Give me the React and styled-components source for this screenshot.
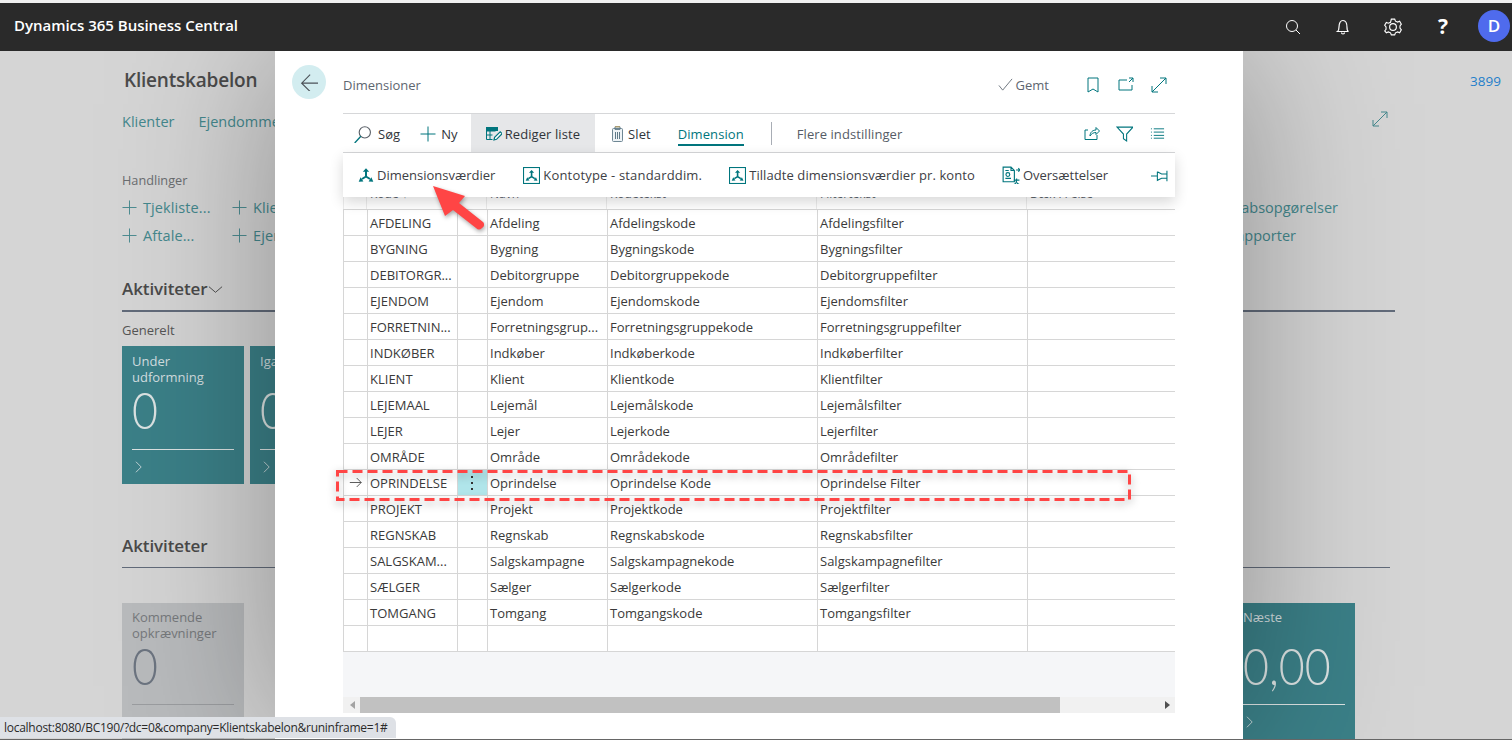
import React from "react";
import styled, { createGlobalStyle } from "styled-components";

const Global = createGlobalStyle`
  html, body { margin: 0; padding: 0; background: #d5d5d5; }
  body { font-family: "Open Sans", "Noto Sans", sans-serif; }
  * { box-sizing: border-box; }
`;

const TEAL = "#00757d";
const Page = styled.div`
  position: relative; width: 1512px; height: 740px; overflow: hidden;
  display: flex; flex-direction: column; background: #d5d5d5;
  border-top: 3px solid #f0f0f0; border-bottom: 1px solid #666;
`;
const TopBar = styled.header`
  position: relative; z-index: 3; flex: 0 0 48px; background: #2a2a2a; color: #fff;
  display: flex; align-items: center; justify-content: space-between; padding: 0 2px 0 14px;
`;
const Brand = styled.div`font-size: 15px; font-weight: 600; letter-spacing: -0.02px; margin-top: -4px;`;
const TopIcons = styled.div`display: flex; align-items: center;`;
const TopSlot = styled.div`width: 50px; display: flex; justify-content: center; color: #fff; margin-top:-1px;`;
const Help = styled.div`font-size: 21px; font-weight: 700; line-height: 1; color: #fff;`;
const Avatar = styled.div`
  width: 32px; height: 32px; border-radius: 50%; background: #4f6bed; color: #fff; margin-left: 10px; margin-top: -3px;
  display: flex; align-items: center; justify-content: center; font-weight: 600; font-size: 17px;
`;

const Backdrop = styled.main`flex: 1; min-height: 0; padding: 0 11px 0 122px; color: #4a4a4a;`;
const TitleRow = styled.div`height: 57px; padding-top: 14px; display: flex; justify-content: space-between; align-items: flex-start;`;
const PageTitle = styled.h1`margin: 0 0 0 2px; font-size: 19px; font-weight: 600; line-height: 30px; color: #4b4b4b; letter-spacing: -0.2px;`;
const Phone = styled.span`font-size: 13.5px; line-height: 32px; color: #1f7fca;`;
const NavRow = styled.nav`
  height: 26px; display: flex; gap: 24px; align-items: center; color: #44888d; font-size: 14.5px; position: relative;
`;
const NavExpand = styled.span`position: absolute; left: 1250px; top: 3px; color: #44888d;`;
const Block = styled.div`padding-top: 37px; font-size: 13px;`;
const Muted = styled.div`color: #6a6d70; font-size: 12.7px; line-height: 18px;`;
const ActionRow = styled.div`
  height: 28px; display: flex; align-items: center; justify-content: space-between; padding-right: 163px; color: #44888d; font-size: 14.5px;
  margin-top: ${p => p.$first ? "4px" : "0"};
`;
const ActionGroup = styled.div`display: grid; grid-template-columns: 110px 110px;`;
const ActionLink = styled.span`display: inline-flex; align-items: center; gap: 6px; letter-spacing: .1px;`;
const RightLink = styled.span`margin-right: ${p => p.$mr || 0};`;
const SectionHead = styled.h2`
  margin: ${p => p.$plain ? "50px" : "28px"} 0 0; font-size: 17px; font-weight: 600; line-height: 24px; color: #4a4a4a; letter-spacing: -0.1px;
  display: flex; align-items: center;
`;
const Rule = styled.div`
  margin-top: 9px; height: ${p => p.$thin ? "1px" : "2px"}; background: #626b7a; margin-right: ${p => p.$thin ? "111px" : "106px"};
`;
const SubHead = styled.div`margin-top: 10px; font-size: 13px; line-height: 17px; color: #555;`;
const Tiles = styled.div`display: flex; gap: 6px; margin-top: ${p => p.$top || "7px"}; justify-content: ${p => p.$spread ? "space-between" : "flex-start"}; padding-right: ${p => p.$spread ? "146px" : "0"};`;
const Tile = styled.div`
  width: 122px; height: ${p => p.$tall ? "136px" : "138px"}; padding: ${p => p.$tall ? "6px" : "7px"} 10px 0; flex: none;
  background: ${p => p.$gray ? "#b9bbbd" : "#3b8088"}; color: ${p => p.$gray ? "#76797c" : "#d3dfe0"};
  display: flex; flex-direction: column;
`;
const TileLabel = styled.div`font-size: 13px; line-height: 16px; height: 32px;`;
const TileValue = styled.div`
  font-family: "Lato", sans-serif; font-weight: 300; font-size: 52px; line-height: 44px; color: ${p => p.$gray ? "#6c7480" : "#dce3e3"};
  margin-top: 2px; flex: 1; transform: scaleX(.86); transform-origin: left center;
`;
const TileRule = styled.div`height: 1px; background: ${p => p.$gray ? "#9b9da0" : "#dce3e3"};`;
const TileMore = styled.div`height: 34px; display: flex; align-items: center; color: #cfdcdd;`;

const Modal = styled.section`
  position: absolute; left: 275px; top: 48px; bottom: 0; width: 968px; background: #fff; z-index: 2;
  box-shadow: 0 0 150px rgba(0,0,0,.34);
  display: grid; grid-template-columns: 68px 832px;
`;
const BackCol = styled.div`padding: 14px 0 0 17px;`;
const BackBtn = styled.div`width: 34px; height: 34px; border-radius: 50%; background: #d3edf0; display: flex; align-items: center; justify-content: center; color: #4c5258;`;
const Body = styled.div`position: relative; min-width: 0;`;
const ModalHead = styled.div`
  height: 63px; display: flex; align-items: center; justify-content: space-between; border-bottom: 1px solid #d6d7d9; padding-top: 5px;
`;
const Crumb = styled.div`font-size: 13px; color: #5e6670;`;
const HeadTools = styled.div`display: flex; align-items: center; color: ${TEAL};`;
const Saved = styled.span`display: inline-flex; align-items: center; gap: 3px; font-size: 13px; color: #5e6670; margin-right: 27px;`;
const HeadTool = styled.span`width: 33px; display: flex; justify-content: center;`;
const ActionBar = styled.div`
  height: 39px; display: flex; align-items: center; font-size: 13px; color: #30343a; border-bottom: 1px solid #d6d7d9; letter-spacing: .08px;
`;
const BarBtn = styled.span`
  display: inline-flex; align-items: center; gap: ${p => p.$gap || "5px"}; height: 38px;
  padding: 2px ${p => p.$pad || "8px"} 0; background: ${p => p.$active ? "#e6e7e9" : "transparent"}; color: #30343a; margin-left: ${p => p.$ml || 0};
`;
const Tinted = styled.span`color: ${TEAL}; display: flex;`;
const TabBtn = styled.span`
  color: ${TEAL}; margin-left: 11px; line-height: 18px; border-bottom: 2px solid ${TEAL}; padding-bottom: 1px; margin-top: 5px;
`;
const Sep = styled.span`width: 1px; height: 23px; background: #a8adb5; margin: 0 25px 0 27px;`;
const MoreLink = styled.span`color: #565c66; margin-top: 2px;`;
const BarRight = styled.span`margin-left: auto; display: flex; align-items: center; color: ${TEAL}; padding-right: 1px;`;
const BarTool = styled.span`width: 33px; display: flex; justify-content: center;`;
const Menu = styled.div`
  position: absolute; left: 0; right: 0; top: 102px; height: 44px; background: #fff; z-index: 1;
  box-shadow: 0 5px 14px rgba(0,0,0,.16);
  display: flex; align-items: center; font-size: 13px; padding-left: 15px;
`;
const MenuItem = styled.span`display: inline-flex; align-items: center; gap: 3px; margin-right: ${p => p.$mr}; color: ${TEAL};`;
const MenuText = styled.span`color: #3d4045; letter-spacing: ${p => p.$ls || 0};`;
const MenuPin = styled.span`margin-left: auto; margin-right: 7px; color: ${TEAL}; display: flex;`;

const cols = "23px 90px 30px 120px 210px 210px 148px";
const HeadRow = styled.div`
  display: grid; grid-template-columns: ${cols}; height: 56px; font-size: 12px; color: #5e6670; border-left: 1px solid #ececec;
`;
const HeadCell = styled.div`
  display: flex; align-items: flex-end; padding: 0 3px 7px; border-right: 1px solid #ececec;
  &:last-child { border-right: 0; }
`;
const Row = styled.div`
  display: grid; grid-template-columns: ${cols}; height: 26px; border-top: 1px solid #d6d6d6; font-size: 13px; color: #3a3a3a;
  border-left: 1px solid #d6d6d6;
`;
const Cell = styled.div`
  display: flex; align-items: center; padding: 0 3px 0 2px; white-space: nowrap; overflow: hidden;
  border-left: 1px solid #d6d6d6;
  ${p => p.$lead && "border-left: 0; padding: 0 0 0 5px;"}
  ${p => p.$menu && "background: #b0e5ea; justify-content: center; padding: 0 2px 0 0;"}
`;
const Kebab = styled.span`display: flex; flex-direction: column; gap: 4px;`;
const Dot = styled.i`width: 2px; height: 2px; background: #333; display: block;`;
const Filler = styled.div`height: 46px; background: #f5f6f8; border-top: 1px solid #d6d6d6;`;
const ScrollBar = styled.div`
  height: 16px; background: #f1f1f1; display: flex; align-items: center; justify-content: space-between; padding: 0 5px; color: #505050; position: relative;
`;
const Thumb = styled.div`position: absolute; left: 17px; top: 0; bottom: 0; width: 700px; background: #c1c1c1;`;
const ArrowL = styled.i`width: 0; height: 0; border: 4px solid transparent; border-left: 0; border-right: 5px solid #a3a3a3; margin-left: 2px;`;
const ArrowR = styled.i`width: 0; height: 0; border: 4px solid transparent; border-right: 0; border-left: 5px solid #505050;`;

const StatusTip = styled.div`
  position: absolute; left: 0; bottom: 1px; z-index: 5; height: 21px; width: 396px; background: #dee1e6; border-top-right-radius: 6px;
  font-size: 12px; line-height: 21px; padding-left: 4px; color: #2a2a2a; letter-spacing: -0.27px; white-space: nowrap;
`;
const Highlight = styled.svg`
  position: absolute; left: 335px; top: 466px; z-index: 4; filter: drop-shadow(0 3px 4px rgba(0,0,0,.35));
`;
const Pointer = styled.svg`position: absolute; left: 425px; top: 175px; z-index: 4; filter: drop-shadow(1px 2px 2px rgba(0,0,0,.35));`;

const Svg = ({ s = 16, w = 16, children, sw = 1, ...r }) => (
  <svg width={s} height={s} viewBox={`0 0 ${w} ${w}`} fill="none" stroke="currentColor" strokeWidth={sw} {...r}>{children}</svg>
);
const Plus = ({ s = 15 }) => <Svg s={s}><path d="M8 .5v15M.5 8h15" /></Svg>;
const Chevron = () => <Svg s={14}><path d="M4.5 2l6 6-6 6" /></Svg>;
const Expand = ({ s = 16 }) => <Svg s={s}><path d="M1 15L15 1M9 1h6v6M1 9v6h6" /></Svg>;
const TriArrow = () => (
  <g>
    <path d="M8 9.500V3.500M8 9.500l4 2.500M8 9.500l-4 2.500" strokeWidth="2" />
    <path d="M4.800 4.800L8 1.200l3.200 3.600zM10.600 14.500l4.700.3-1.900-4.500zM5.400 14.500l-4.700.3 1.900-4.500z" fill="currentColor" stroke="none" />
  </g>
);
const DimIcon = () => <Svg s={16}><TriArrow /></Svg>;
const BoxDim = () => (
  <Svg s={17}><rect x=".5" y=".5" width="15" height="15" />
    <g transform="translate(2 1.800) scale(.76)"><TriArrow /></g></Svg>
);
const Search = () => <Svg s={18}><circle cx="10.500" cy="6.500" r="5" stroke="#5a6068" /><path d="M7 10L1.500 16" stroke={TEAL} strokeWidth="1.200" /></Svg>;
const EditList = () => (
  <Svg s={16}><path d="M.5 1.500h11v3M.5 1.500v12h6M.5 5h9M.5 9h6M4 5v8.500" /><rect x=".5" y="1.500" width="11" height="3" fill="currentColor" />
    <path d="M8 14l.6-2.600 5.600-5.600 1.900 1.900-5.600 5.600z" fill="#fff" strokeWidth="1.200" /></Svg>
);
const Trash = () => (
  <Svg s={16} style={{ color: "#6e8794" }}><rect x="1.500" y="2.500" width="10" height="13" rx="1" fill="#eef3f6" />
    <path d="M4 .8h5v2.600H4zM4.500 6v7M6.500 6v7M8.500 6v7" stroke="#5f7a88" /><path d="M4 .8h5" stroke="#b59a5a" /></Svg>
);
const Translate = () => (
  <Svg s={18}><path d="M1 1h7l3 3v10H1zM8 1v3h3M3 4h3M3 11h5" /><circle cx="5.200" cy="7.600" r="1.700" />
    <path d="M12.500 3.500h3M14.500 2l1.500 1.500L14.500 5M10.500 12.500h5M13 11v1.500c0 2-1 3.500-2.500 4M12.500 14c.8 1.200 2 2.200 3.200 2.600" /></Svg>
);

const rows = [
  ["AFDELING", "Afdeling", "Afdelingskode", "Afdelingsfilter"],
  ["BYGNING", "Bygning", "Bygningskode", "Bygningsfilter"],
  ["DEBITORGR...", "Debitorgruppe", "Debitorgruppekode", "Debitorgruppefilter"],
  ["EJENDOM", "Ejendom", "Ejendomskode", "Ejendomsfilter"],
  ["FORRETNIN...", "Forretningsgrup...", "Forretningsgruppekode", "Forretningsgruppefilter"],
  ["INDKØBER", "Indkøber", "Indkøberkode", "Indkøberfilter"],
  ["KLIENT", "Klient", "Klientkode", "Klientfilter"],
  ["LEJEMAAL", "Lejemål", "Lejemålskode", "Lejemålsfilter"],
  ["LEJER", "Lejer", "Lejerkode", "Lejerfilter"],
  ["OMRÅDE", "Område", "Områdekode", "Områdefilter"],
  ["OPRINDELSE", "Oprindelse", "Oprindelse Kode", "Oprindelse Filter"],
  ["PROJEKT", "Projekt", "Projektkode", "Projektfilter"],
  ["REGNSKAB", "Regnskab", "Regnskabskode", "Regnskabsfilter"],
  ["SALGSKAM...", "Salgskampagne", "Salgskampagnekode", "Salgskampagnefilter"],
  ["SÆLGER", "Sælger", "Sælgerkode", "Sælgerfilter"],
  ["TOMGANG", "Tomgang", "Tomgangskode", "Tomgangsfilter"],
  ["", "", "", ""],
];

export default function App() {
  return (
    <Page>
      <Global />
      <TopBar>
        <Brand>Dynamics 365 Business Central</Brand>
        <TopIcons>
          <TopSlot><Svg s={16}><circle cx="7" cy="7" r="5.500" /><path d="M11 11l4 4" /></Svg></TopSlot>
          <TopSlot><Svg s={16} sw={1.200}><path d="M2.500 12.500c1.300-1 1.500-2 1.500-4.500C4 4 5.500 1.500 8 1.500s4 2.500 4 7c0 2.500.2 3.500 1.500 4zM6.500 13.500c0 2 3 2 3 0" /></Svg></TopSlot>
          <TopSlot><Svg s={18}><circle cx="8" cy="8" r="3" /><path d="M6.500 1h3l.7 1.800 1.900.8 1.800-.7 1.500 2.600-1.200 1.500v2l1.200 1.500-1.500 2.600-1.800-.7-1.900.8-.7 1.800h-3l-.7-1.800-1.900-.8-1.800.7L.6 11.500 1.800 10V8L.6 6.500 2.100 3.900l1.800.7 1.900-.8z" /></Svg></TopSlot>
          <TopSlot><Help>?</Help></TopSlot>
          <Avatar>D</Avatar>
        </TopIcons>
      </TopBar>

      <Backdrop>
        <TitleRow><PageTitle>Klientskabelon</PageTitle><Phone>3899</Phone></TitleRow>
        <NavRow><span>Klienter</span><span>Ejendomme</span><NavExpand><Expand /></NavExpand></NavRow>
        <Block>
          <Muted>Handlinger</Muted>
          <ActionRow $first>
            <ActionGroup><ActionLink><Plus />Tjekliste...</ActionLink><ActionLink><Plus />Klienter</ActionLink></ActionGroup>
            <RightLink>Regnskabsopgørelser</RightLink>
          </ActionRow>
          <ActionRow>
            <ActionGroup><ActionLink><Plus />Aftale...</ActionLink><ActionLink><Plus />Ejendom</ActionLink></ActionGroup>
            <RightLink $mr="42px">Rapporter</RightLink>
          </ActionRow>
        </Block>
        <SectionHead>Aktiviteter<Svg s={15}><path d="M1 5l7 6 7-6" /></Svg></SectionHead>
        <Rule />
        <SubHead>Generelt</SubHead>
        <Tiles>
          <Tile><TileLabel>Under<br />udformning</TileLabel><TileValue>0</TileValue><TileRule /><TileMore><Chevron /></TileMore></Tile>
          <Tile><TileLabel>Igangværende</TileLabel><TileValue>0</TileValue><TileRule /><TileMore><Chevron /></TileMore></Tile>
        </Tiles>
        <SectionHead $plain>Aktiviteter</SectionHead>
        <Rule $thin />
        <Tiles $top="35px" $spread>
          <Tile $gray $tall><TileLabel>Kommende<br />opkrævninger</TileLabel><TileValue $gray>0</TileValue><TileRule $gray /><TileMore /></Tile>
          <Tile $tall><TileLabel>Næste</TileLabel><TileValue>0,00</TileValue><TileRule /><TileMore><Chevron /></TileMore></Tile>
        </Tiles>
      </Backdrop>

      <Modal>
        <BackCol><BackBtn><Svg s={18}><path d="M17 9H1.500M9 1.500L1.500 9 9 16.500" /></Svg></BackBtn></BackCol>
        <Body>
          <ModalHead>
            <Crumb>Dimensioner</Crumb>
            <HeadTools>
              <Saved><Svg s={15} style={{ color: "#6a727c" }}><path d="M1 9l4 5L15 2" /></Svg>Gemt</Saved>
              <HeadTool><Svg s={16}><path d="M3 1h10v14l-5-3-5 3z" /></Svg></HeadTool>
              <HeadTool><Svg s={16}><path d="M9 3H1v10h13V8M11 1h4v4M15 1l-4 4" /></Svg></HeadTool>
              <HeadTool><Expand /></HeadTool>
            </HeadTools>
          </ModalHead>
          <ActionBar>
            <BarBtn $pad="10px" $gap="7px"><Search />Søg</BarBtn>
            <BarBtn $pad="0px" $gap="5px" $ml="10px"><Tinted><Plus s={16} /></Tinted>Ny</BarBtn>
            <BarBtn $active $pad="15px" $gap="3px" $ml="13px"><Tinted><EditList /></Tinted>Rediger liste</BarBtn>
            <BarBtn $pad="16px" $gap="1px"><Trash />Slet</BarBtn>
            <TabBtn>Dimension</TabBtn>
            <Sep />
            <MoreLink>Flere indstillinger</MoreLink>
            <BarRight>
              <BarTool><Svg s={16}><path d="M13 10v4.500H1V5h3M6 11c0-4 3-6 6-6V2.500L15.500 6 12 9.500V7.500c-2.500 0-4.500 1-6 3.500z" /></Svg></BarTool>
              <BarTool><Svg s={17}><path d="M1 2h15l-6 6.500V15l-3-2V8.500z" /></Svg></BarTool>
              <BarTool><Svg s={15}><path d="M1 3h1M1 6.500h1M1 10h1M1 13h1M4 3h11M4 6.500h11M4 10h11M4 13h11" /></Svg></BarTool>
            </BarRight>
          </ActionBar>
          <Menu>
            <MenuItem $mr="28px"><DimIcon /><MenuText>Dimensionsværdier</MenuText></MenuItem>
            <MenuItem $mr="27px"><BoxDim /><MenuText $ls=".17px">Kontotype - standarddim.</MenuText></MenuItem>
            <MenuItem $mr="27px"><BoxDim /><MenuText $ls=".08px">Tilladte dimensionsværdier pr. konto</MenuText></MenuItem>
            <MenuItem $mr="0"><Translate /><MenuText>Oversættelser</MenuText></MenuItem>
            <MenuPin><Svg s={17}><path d="M0 8.500h6M6 4.500l4 2h5V3.500M6 4.500v8l4-2h5v3M15 3.500v10" /></Svg></MenuPin>
          </Menu>
          <HeadRow>
            <HeadCell /><HeadCell>Kode ↑</HeadCell><HeadCell /><HeadCell>Navn</HeadCell><HeadCell>Kodetekst</HeadCell><HeadCell>Filtertekst</HeadCell><HeadCell>Dæk i Felse</HeadCell>
          </HeadRow>
          {rows.map((r, i) => {
            const current = r[0] === "OPRINDELSE";
            return (
              <Row key={i}>
                <Cell $lead>{current && <Svg s={13}><path d="M1 8h14M9.500 2.500L15 8l-5.500 5.500" /></Svg>}</Cell>
                <Cell>{r[0]}</Cell>
                <Cell $menu={current}>{current && <Kebab><Dot /><Dot /><Dot /></Kebab>}</Cell>
                <Cell>{r[1]}</Cell>
                <Cell>{r[2]}</Cell>
                <Cell>{r[3]}</Cell>
                <Cell />
              </Row>
            );
          })}
          <Filler />
          <ScrollBar><ArrowL /><Thumb /><ArrowR /></ScrollBar>
        </Body>
      </Modal>

      <Highlight width="798" height="36" viewBox="0 0 798 36">
        <rect x="2.500" y="2.500" width="792" height="28" fill="none" stroke="#ff4545" strokeWidth="3" strokeDasharray="10 5" />
      </Highlight>
      <Pointer width="64" height="60" viewBox="0 0 64 60">
        <path d="M8 8l32 10-6 7 24 19c2 2 1 5-1 6-2 2-4 2-6 0L28 32l-8 6z" fill="#ff4545" />
      </Pointer>
      <StatusTip>localhost:8080/BC190/?dc=0&amp;company=Klientskabelon&amp;runinframe=1#</StatusTip>
    </Page>
  );
}
